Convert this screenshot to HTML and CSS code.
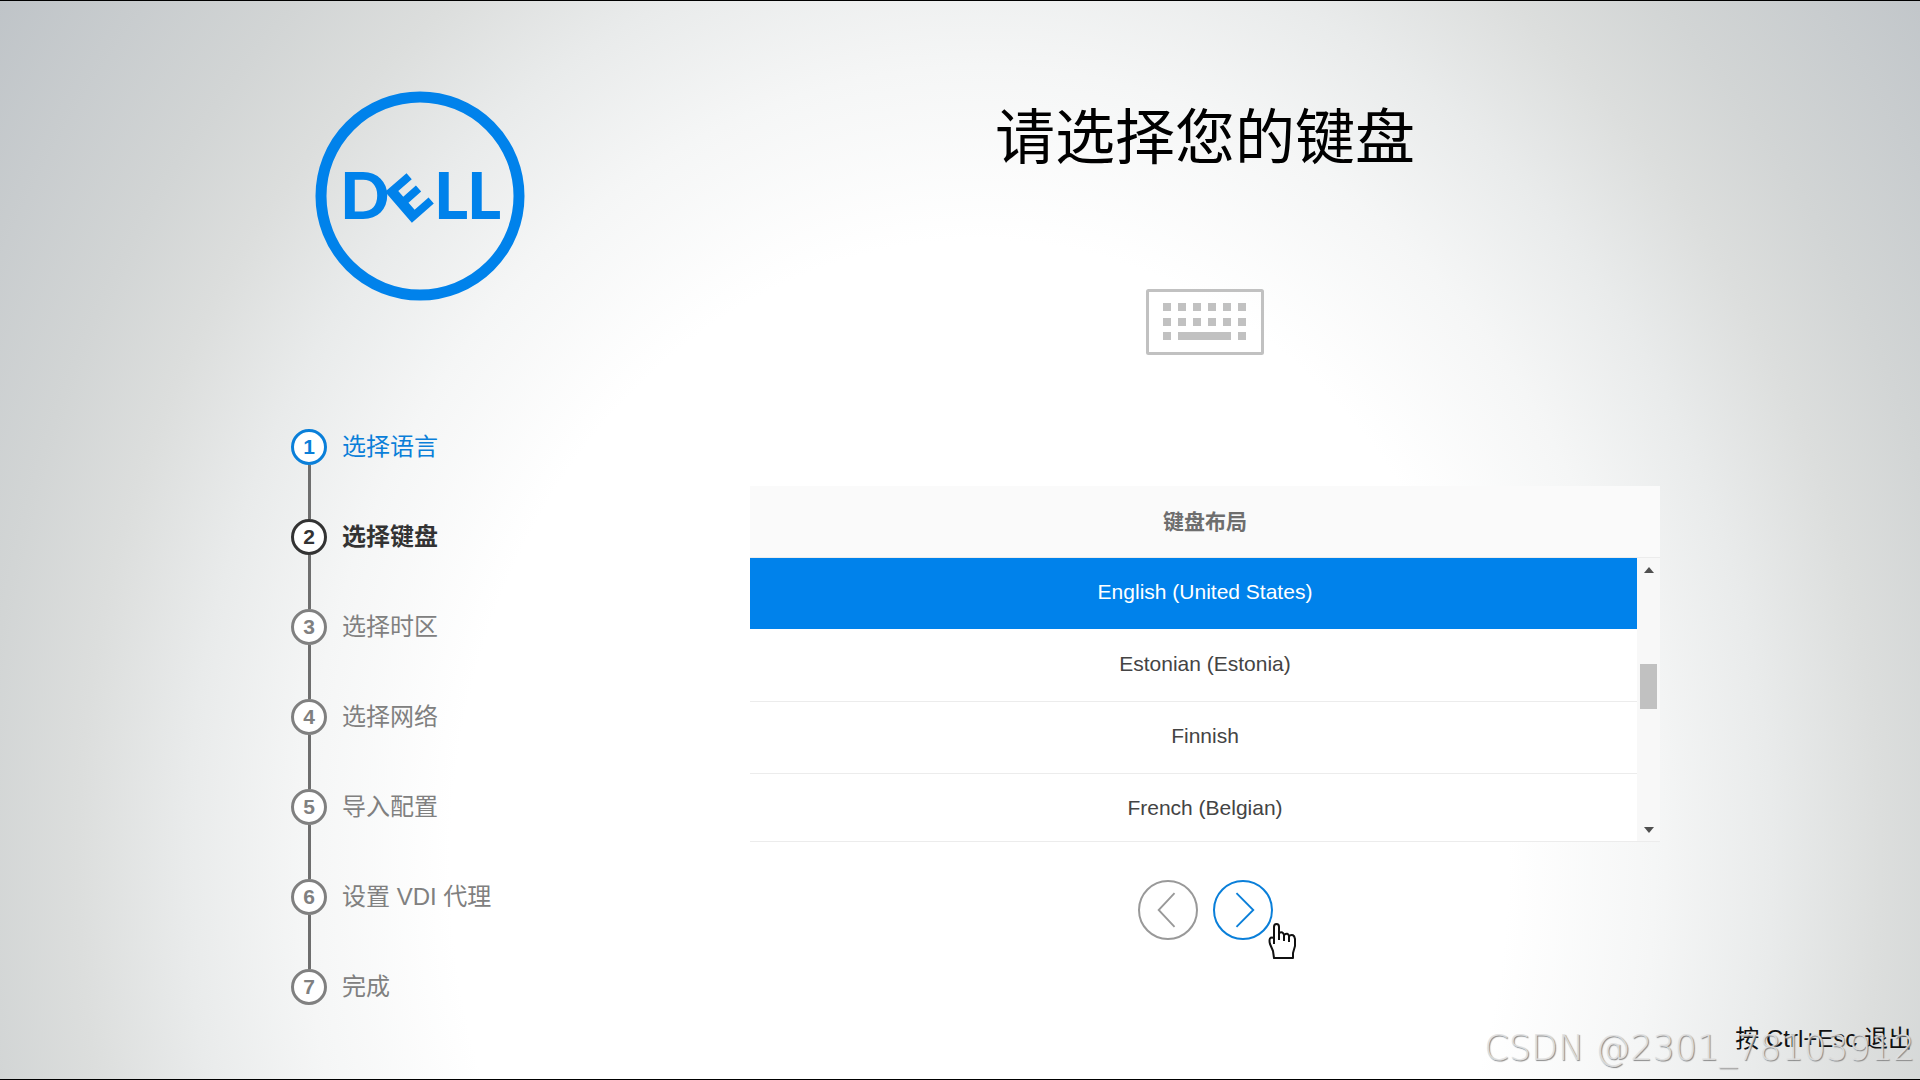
FILE: index.html
```
<!DOCTYPE html>
<html lang="zh-CN">
<head>
    <meta charset="UTF-8">
    <title>请选择您的键盘</title>
    <link rel="stylesheet" href="styles.css">
</head>
<body>
    <div class="wizard">
        <aside class="sidebar">
            <svg class="logo" viewBox="0 0 210 210" role="img" aria-label="DELL">
                <circle cx="105" cy="105" r="99" fill="none" stroke="#0082eb" stroke-width="11"/>
                <g class="logo-text">
                    <text x="25" y="128">D</text>
                    <text x="93" y="135" class="logo-e" transform="rotate(-41 93 135)">E</text>
                    <text x="119" y="128">L</text>
                    <text x="152" y="128">L</text>
                </g>
            </svg>
            <ol class="steps">
                <li class="step done"><span class="num">1</span><span class="label">选择语言</span></li>
                <li class="step current"><span class="num">2</span><span class="label">选择键盘</span></li>
                <li class="step"><span class="num">3</span><span class="label">选择时区</span></li>
                <li class="step"><span class="num">4</span><span class="label">选择网络</span></li>
                <li class="step"><span class="num">5</span><span class="label">导入配置</span></li>
                <li class="step"><span class="num">6</span><span class="label">设置 VDI 代理</span></li>
                <li class="step"><span class="num">7</span><span class="label">完成</span></li>
            </ol>
        </aside>
        <main class="content">
            <h1>请选择您的键盘</h1>
            <svg class="keyboard" viewBox="0 0 118 66" fill="#c1c1c1">
                <rect x="1.5" y="1.5" width="115" height="63" rx="1" fill="none" stroke="#c1c1c1" stroke-width="3"/>
                <path d="M17 14h8v8h-8zM32 14h8v8h-8zM47 14h8v8h-8zM62 14h8v8h-8zM77 14h8v8h-8zM92 14h8v8h-8z"/>
                <path d="M17 29h8v8h-8zM32 29h8v8h-8zM47 29h8v8h-8zM62 29h8v8h-8zM77 29h8v8h-8zM92 29h8v8h-8z"/>
                <path d="M17 43h8v8h-8zM32 43h53v8h-53zM92 43h8v8h-8z"/>
            </svg>
            <div class="list">
                <table>
                    <thead>
                        <tr><th>键盘布局</th></tr>
                    </thead>
                    <tbody>
                        <tr class="selected"><td>English (United States)</td></tr>
                        <tr><td>Estonian (Estonia)</td></tr>
                        <tr><td>Finnish</td></tr>
                        <tr><td>French (Belgian)</td></tr>
                    </tbody>
                </table>
                <div class="scrollbar">
                    <span class="arrow up"></span>
                    <span class="thumb"></span>
                    <span class="arrow down"></span>
                </div>
            </div>
            <div class="nav">
                <button type="button" class="prev" aria-label="上一步">
                    <svg viewBox="0 0 60 60"><path d="M37 12L20 30L37 48"/></svg>
                </button>
                <button type="button" class="next" aria-label="下一步">
                    <svg viewBox="0 0 60 60"><path d="M23 12L41 30L23 48"/></svg>
                </button>
                <svg class="cursor" viewBox="0 0 28 37">
                    <path d="M6 35L5 28L2 21Q0 13 6 15V4Q6 1 8.500 1Q11 1 11 4V10Q15 8 16 12Q20 9 21 13Q26 10 27 16V23L25 30V35Z" fill="#fff" stroke="#111" stroke-width="2" stroke-linejoin="round"/>
                    <path d="M6 15V21M11 9V17M16 11V18M21 13V19" fill="none" stroke="#111" stroke-width="2"/>
                </svg>
            </div>
        </main>
    </div>
    <div class="exit-hint">按 Ctrl+Esc 退出</div>
    <div class="watermark">CSDN @2301_78103912</div>
</body>
</html>
```
FILE: styles.css
```
* { box-sizing: border-box; }
body {
    margin: 0;
    min-height: 100vh;
    position: relative;
    border-top: 1px solid #000;
    border-bottom: 1px solid #000;
    font-family: "Liberation Sans", "Noto Sans CJK SC", sans-serif;
    background: radial-gradient(ellipse 51% 107% at 51% 80%, #fff 54%, #f5f6f6 69%, #e9ebeb 81%, #dcdedd 92%, #d2d5d5 102%, #bfc4c8 125%);
}

.wizard { display: grid; grid-template-columns: 459px 1fr; padding: 90px 260px 0 291px; }

/* left column */
.logo { display: block; width: 210px; height: 210px; margin-left: 24px; }
.logo-text { fill: #0082eb; font-family: Lato, sans-serif; font-weight: 900; font-size: 65px; }
.logo-e { font-family: "DejaVu Sans", sans-serif; font-weight: bold; font-size: 56px; }
.steps { list-style: none; margin: 128px 0 0; padding: 0; }
.step { position: relative; display: flex; align-items: center; gap: 15px; height: 36px; margin-bottom: 54px; font-size: 24px; color: #808080; }
.label { padding-bottom: 6px; }
.num { display: flex; align-items: center; justify-content: center; width: 36px; height: 36px; border: 3px solid #808080; border-radius: 50%; background: #fff; font-size: 21px; font-weight: bold; }
.step:not(:last-child)::after { content: ""; position: absolute; left: 17px; top: 36px; width: 3px; height: 54px; background: #6e6e6e; }
.done { color: #0a7fd9; }
.done .num { border-color: #0a7fd9; }
.current { color: #333; font-weight: bold; }
.current .num { border-color: #333; }

/* right column */
.content { display: flex; flex-direction: column; align-items: center; }
h1 { margin: 0; padding-top: 3px; font-size: 60px; font-weight: normal; line-height: 90px; color: #000; }
.keyboard { width: 118px; height: 66px; margin-top: 105px; }
.list { position: relative; width: 100%; margin-top: 131px; }
table, thead, tbody { display: block; }
tr { display: flex; align-items: center; justify-content: center; height: 72px; border-bottom: 1px solid #ececec; }
thead tr { height: 72px; background: #fafafa; }
th { padding: 0 0 4px; font-size: 21px; color: #6e6e6e; }
tbody { height: 284px; margin-right: 23px; background: #fff; overflow: hidden; border-bottom: 1px solid #ececec; }
tbody tr { padding-left: 23px; }
td { padding: 0 0 4px; font-size: 21px; color: #444; }
.selected { background: #0082eb; border-color: #fff; }
.selected td { color: #fff; }
.scrollbar { position: absolute; top: 72px; right: 0; bottom: 0; width: 23px; padding: 9px 3px 8px; display: flex; flex-direction: column; align-items: center; background: #f8f8f8; border-bottom: 1px solid #ececec; }
.arrow { border: 5px solid transparent; border-top-width: 0; border-bottom: 6px solid #505050; }
.arrow.down { border-top: 6px solid #505050; border-bottom-width: 0; margin-top: auto; }
.thumb { width: 17px; height: 45px; margin-top: 91px; background: #c1c1c1; }

.nav { position: relative; display: flex; gap: 15px; margin-top: 38px; }
.nav button { width: 60px; height: 60px; padding: 0; border: 2px solid #999; border-radius: 50%; background: #fff; color: #999; }
.nav button svg { display: block; width: 56px; height: 56px; fill: none; stroke: currentColor; stroke-width: 2; }
.nav .next { border-color: #0a7fd9; color: #0a7fd9; }
.cursor { position: absolute; left: 130px; top: 43px; width: 28px; height: 37px; }

.exit-hint { position: absolute; right: 8px; bottom: 22px; font-size: 24px; line-height: 36px; color: #111; }
.watermark { position: absolute; right: 5px; bottom: 11px; font-family: "DejaVu Sans", sans-serif; font-weight: 200; font-size: 35px; line-height: 40px; color: rgba(225, 225, 225, 0.9); text-shadow: 1px 1px 1px #888; }
```
